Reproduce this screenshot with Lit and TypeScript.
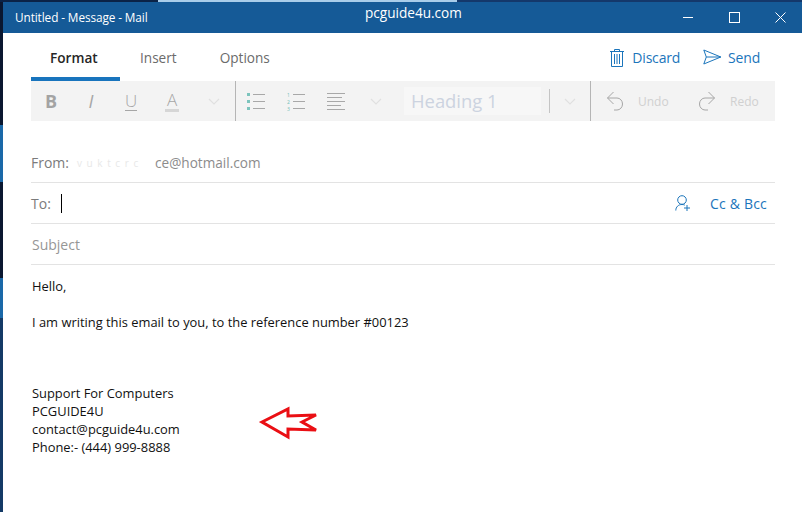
import { LitElement, html, css } from 'lit';
import { customElement } from 'lit/decorators.js';

const chevron = html`<svg width="12" height="7" viewBox="0 0 12 7" fill="none" stroke="#e0e0e0" stroke-width="1.2"><path d="M1 1l5 5 5-5" /></svg>`;

@customElement('app-root')
export default class AppRoot extends LitElement {
  static styles = css`
    :host {
      display: block;
      width: 802px;
      height: 512px;
      overflow: hidden;
      position: relative;
      font-family: 'Open Sans', 'Noto Sans', sans-serif;
      background:
        linear-gradient(90deg, #0b2347 0 158px, #a9cdea 158px 457px, #14386b 457px) top / 100% 2px no-repeat,
        linear-gradient(180deg, #0a1730 0 125px, #1a68a8 125px 182px, #0a1730 182px 278px, #1a68a8 278px 318px, #143a66 318px) left / 3px 100% no-repeat;
    }
    .window {
      margin: 2px 0 0 3px;
      height: 510px;
      background: #fff;
      display: flex;
      flex-direction: column;
    }
    .titlebar {
      height: 31px;
      flex: none;
      background: #155a97;
      color: #fff;
      display: flex;
      align-items: flex-start;
      padding-left: 12px;
    }
    .title {
      flex: none;
      font-size: 11.8px;
      line-height: 30px;
      width: 350px;
      letter-spacing: -0.1px;
    }
    .site {
      flex: none;
      font-size: 13.6px;
      line-height: 22px;
      width: 300px;
    }
    .winbtn {
      flex: none;
      width: 46px;
      height: 30px;
      display: flex;
      align-items: center;
      justify-content: center;
    }
    .tabs {
      height: 48px;
      flex: none;
      display: flex;
      margin: 0 27px 0 28px;
      align-items: stretch;
    }
    .tab {
      color: #6b6b6b;
      font-size: 13.6px;
      line-height: 49px;
      margin-right: 43px;
    }
    .tab.active {
      width: 89px;
      margin-right: 20px;
      box-sizing: border-box;
      padding-left: 19px;
      color: #262626;
      font-weight: 600;
      border-bottom: 4px solid #1874bd;
    }
    .spacer {
      flex: 1;
    }
    .action {
      display: flex;
      align-items: center;
      gap: 8px;
      color: #1b75bb;
      font-size: 14px;
      letter-spacing: -0.2px;
    }
    .action.discard {
      margin-right: 24px;
      position: relative;
      left: 1px;
    }
    .action.send {
      gap: 6px;
      margin-right: 15px;
    }
    .toolbar {
      height: 40px;
      flex: none;
      margin: 0 27px 0 28px;
      background: #f3f3f3;
      display: flex;
      align-items: stretch;
    }
    .cell {
      width: 40px;
      flex: none;
      display: flex;
      align-items: center;
      justify-content: center;
      color: #a6a6a6;
    }
    .cell.wide {
      width: 42px;
    }
    .bold {
      font-size: 18px;
      font-weight: 700;
      color: #a3a3a3;
    }
    .italic {
      font-size: 18px;
      font-style: italic;
      font-weight: 400;
    }
    .under {
      font-size: 17px;
      font-weight: 300;
      border-bottom: 1px solid #a6a6a6;
      line-height: 19px;
    }
    .colour {
      font-size: 17px;
      font-weight: 300;
      border-bottom: 3px solid #d6d6d6;
      line-height: 19px;
      padding: 0 2px;
    }
    .rule {
      width: 1px;
      flex: none;
      background: #b5b5b5;
    }
    .heading {
      width: 137px;
      height: 28px;
      flex: none;
      align-self: center;
      margin: 0 8px;
      background: #f7f7f7;
      color: #ccd3e0;
      font-size: 18.4px;
      line-height: 28px;
      padding-left: 7px;
      box-sizing: border-box;
    }
    .rule.short {
      height: 24px;
      align-self: center;
      background: #c4c4c4;
    }
    .history {
      display: flex;
      align-items: center;
      color: #d0d0d0;
      font-size: 12px;
      gap: 14px;
    }
    .history.undo {
      margin-left: 15px;
      width: 92px;
    }
    .rows {
      margin: 22px 27px 0 28px;
      flex: none;
    }
    .row {
      height: 40px;
      box-sizing: border-box;
      border-bottom: 1px solid #e3e3e3;
      display: flex;
      align-items: center;
      font-size: 14px;
      color: #7b7b7b;
    }
    .row + .row {
      height: 41px;
    }
    .redacted {
      flex: none;
      width: 86px;
      padding-left: 8px;
      box-sizing: border-box;
      color: #e8e8e8;
      letter-spacing: 1px;
      font-size: 10px;
      white-space: nowrap;
    }
    .address {
      color: #8c8c8c;
      font-size: 13.6px;
    }
    .caret {
      width: 1px;
      height: 19px;
      background: #000;
      margin-left: 10px;
    }
    .subject {
      color: #969696;
      margin-left: 1px;
    }
    .cc {
      color: #1b75bb;
      display: flex;
      align-items: center;
      gap: 19px;
      margin-right: 8px;
      letter-spacing: 0.2px;
    }
    .body {
      margin: 12px 0 0 29px;
      font-size: 12.9px;
      line-height: 18px;
      color: #111;
    }
    .body p {
      margin: 0 0 18px;
    }
    .body p.gap {
      margin-bottom: 53px;
    }
    .arrow {
      position: absolute;
      left: 258px;
      top: 404px;
    }
    .digits {
      font-size: 5px;
      fill: #6fbdb5;
    }
  `;

  render() {
    return html`
      <div class="window">
        <div class="titlebar">
          <div class="title">Untitled - Message - Mail</div>
          <div class="site">pcguide4u.com</div>
          <div class="winbtn">
            <svg width="12" height="10" viewBox="0 0 12 10" stroke="#fff" fill="none"><path d="M1 5.500h10" /></svg>
          </div>
          <div class="winbtn">
            <svg width="11" height="11" viewBox="0 0 11 11" stroke="#fff" fill="none"><rect x=".5" y=".5" width="10" height="10" /></svg>
          </div>
          <div class="winbtn">
            <svg width="11" height="11" viewBox="0 0 11 11" stroke="#fff" fill="none"><path d="M.5.5l10 10M10.500.5l-10 10" /></svg>
          </div>
        </div>

        <div class="tabs">
          <div class="tab active">Format</div>
          <div class="tab">Insert</div>
          <div class="tab">Options</div>
          <div class="spacer"></div>
          <div class="action discard">
            <svg width="14" height="19" viewBox="0 0 14 19" fill="none" stroke="#1b75bb">
              <path d="M0 3.500h14M4.500 3.500v-2h5v2M1.500 3.500v15h11v-15M4.500 6v10M7 6v10M9.500 6v10" />
            </svg>
            Discard
          </div>
          <div class="action send">
            <svg width="19" height="16" viewBox="0 0 19 16" fill="none" stroke="#1b75bb">
              <path d="M.8 1l17 7-17 7 2.500-7zM3.300 8h14.500" />
            </svg>
            Send
          </div>
        </div>

        <div class="toolbar">
          <div class="cell"><span class="bold">B</span></div>
          <div class="cell"><span class="italic">I</span></div>
          <div class="cell"><span class="under">U</span></div>
          <div class="cell wide"><span class="colour">A</span></div>
          <div class="cell wide">${chevron}</div>
          <div class="rule"></div>
          <div class="cell">
            <svg width="18" height="18" viewBox="0 0 18 18" fill="none" stroke="#a8a8a8">
              <path d="M6 2.500h12M6 9.500h12M6 16.500h12" />
              <path d="M0 1h3v3H0zM0 8h3v3H0zM0 15h3v3H0z" fill="#7cc4bd" stroke="none" />
            </svg>
          </div>
          <div class="cell">
            <svg width="18" height="20" viewBox="0 0 18 20" fill="none" stroke="#a8a8a8">
              <path d="M6 3.500h12M6 10.500h12M6 17.500h12" />
              <text class="digits" x="0" y="6" stroke="none">1</text>
              <text class="digits" x="0" y="13" stroke="none">2</text>
              <text class="digits" x="0" y="20" stroke="none">3</text>
            </svg>
          </div>
          <div class="cell">
            <svg width="18" height="18" viewBox="0 0 18 18" fill="none" stroke="#a8a8a8">
              <path d="M0 1.500h18M0 5.500h15M0 9.500h18M0 13.500h14M0 17.500h18" />
            </svg>
          </div>
          <div class="cell">${chevron}</div>
          <div class="heading">Heading 1</div>
          <div class="rule short"></div>
          <div class="cell">${chevron}</div>
          <div class="rule"></div>
          <div class="history undo">
            <svg width="18" height="20" viewBox="0 0 18 20" fill="none" stroke="#a6a6a6">
              <path d="M7.500 1l-6 6 6 6M1.500 7H11a5.500 6 0 0 1 0 12H8" />
            </svg>
            Undo
          </div>
          <div class="history">
            <svg width="18" height="20" viewBox="0 0 18 20" fill="none" stroke="#a6a6a6">
              <path d="M10.500 1l6 6-6 6M16.500 7H7a5.500 6 0 0 0 0 12h3" />
            </svg>
            Redo
          </div>
        </div>

        <div class="rows">
          <div class="row">
            From:<span class="redacted">v u k t c r c</span><span class="address">ce@hotmail.com</span>
          </div>
          <div class="row">
            To:<span class="caret"></span>
            <div class="spacer"></div>
            <div class="cc">
              <svg width="16" height="16" viewBox="0 0 16 16" fill="none" stroke="#1b75bb">
                <circle cx="7" cy="5" r="4.300" />
                <path d="M.8 15.500c0-3.500 2.500-6 6.200-6 1 0 2 .2 2.800.6M12 10v6M9 13h6" />
              </svg>
              Cc &amp; Bcc
            </div>
          </div>
          <div class="row"><span class="subject">Subject</span></div>
        </div>

        <div class="body">
          <p>Hello,</p>
          <p class="gap">I am writing this email to you, to the reference number #00123</p>
          <div>Support For Computers</div>
          <div>PCGUIDE4U</div>
          <div>contact@pcguide4u.com</div>
          <div>Phone:- (444) 999-8888</div>
        </div>
      </div>

      <svg class="arrow" width="62" height="36" viewBox="0 0 62 36" fill="none">
        <path d="M4 18L30 5v7l28-1-14 7 14 8-28-1v8z" stroke="#ea0f14" stroke-width="3" />
      </svg>
    `;
  }
}
